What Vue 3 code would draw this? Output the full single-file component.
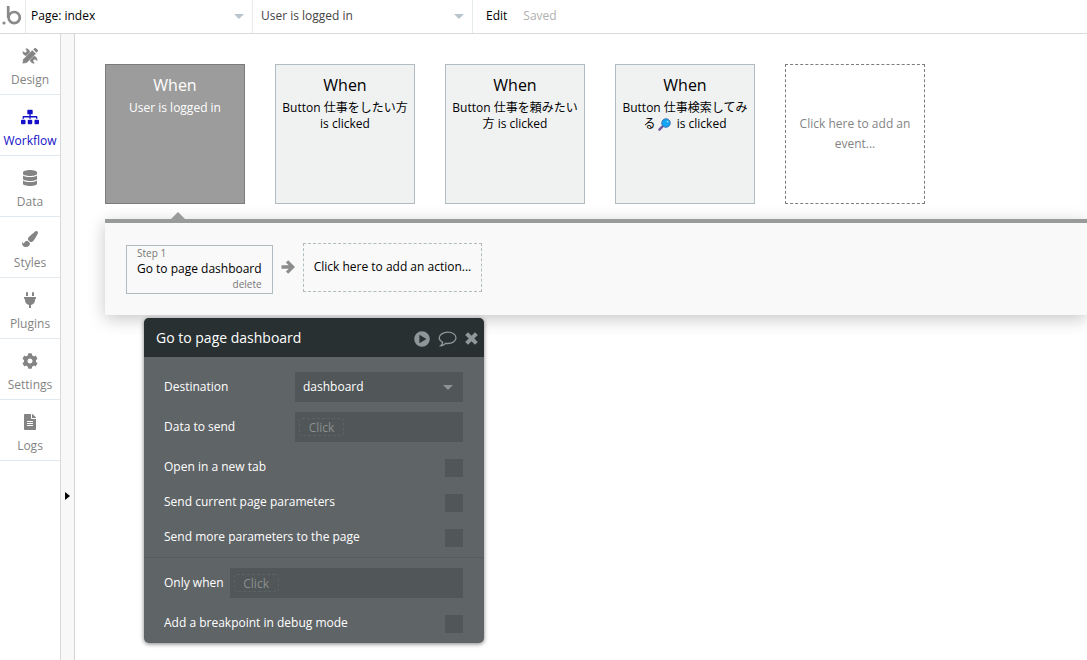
<script setup>
import { ref } from "vue";

const tabs = [
  { label: "Design", icon: "design" },
  {
    label: "Workflow",
    viewBox: "0 0 640 512",
    path: "M128 352H32c-17.67 0-32 14.33-32 32v96c0 17.67 14.33 32 32 32h96c17.67 0 32-14.33 32-32v-96c0-17.67-14.33-32-32-32zm-24-80h192v48h48v-48h192v48h48v-57.59c0-21.17-17.23-38.41-38.41-38.41H344v-64h40c17.67 0 32-14.33 32-32V32c0-17.67-14.33-32-32-32H256c-17.67 0-32 14.33-32 32v96c0 17.67 14.33 32 32 32h40v64H94.41C73.23 224 56 241.23 56 262.41V320h48v-48zm264 80h-96c-17.67 0-32 14.33-32 32v96c0 17.67 14.33 32 32 32h96c17.67 0 32-14.33 32-32v-96c0-17.67-14.33-32-32-32zm240 0h-96c-17.67 0-32 14.33-32 32v96c0 17.67 14.33 32 32 32h96c17.67 0 32-14.33 32-32v-96c0-17.67-14.33-32-32-32z",
  },
  {
    label: "Data",
    viewBox: "0 0 448 512",
    path: "M448 73.143v45.714C448 159.143 347.667 192 224 192S0 159.143 0 118.857V73.143C0 32.857 100.333 0 224 0s224 32.857 224 73.143zM448 176v102.857C448 319.143 347.667 352 224 352S0 319.143 0 278.857V176c48.125 33.143 136.208 48.572 224 48.572S399.874 209.143 448 176zm0 160v102.857C448 479.143 347.667 512 224 512S0 479.143 0 438.857V336c48.125 33.143 136.208 48.572 224 48.572S399.874 369.143 448 336z",
  },
  {
    label: "Styles",
    viewBox: "0 0 512 512",
    path: "M167.02 309.34c-40.12 2.58-76.53 17.86-97.19 72.3-2.35 6.21-8 9.98-14.59 9.98-11.11 0-45.46-27.67-55.25-34.35C0 439.62 37.93 512 128 512c75.86 0 128-43.77 128-120.19 0-3.11-.65-6.08-.97-9.13l-88.01-73.34zM457.89 0c-15.16 0-29.37 6.71-40.21 16.45C213.27 199.05 192 203.34 192 257.09c0 13.7 3.25 26.76 8.73 38.7l63.82 53.18c7.21 1.8 14.64 3.03 22.39 3.03 62.11 0 98.11-45.47 211.16-256.46 7.38-14.35 13.9-29.85 13.9-45.99C512 20.64 486 0 457.89 0z",
  },
  {
    label: "Plugins",
    viewBox: "0 0 384 512",
    path: "M320 32a32 32 0 0 0-64 0v96h64zm48 128H16a16 16 0 0 0-16 16v32a16 16 0 0 0 16 16h16v32a160.07 160.07 0 0 0 128 156.8V512h64v-99.2A160.07 160.07 0 0 0 352 256v-32h16a16 16 0 0 0 16-16v-32a16 16 0 0 0-16-16zM128 32a32 32 0 0 0-64 0v96h64z",
  },
  {
    label: "Settings",
    viewBox: "0 0 512 512",
    path: "M487.4 315.7l-42.6-24.6c4.3-23.2 4.3-47 0-70.2l42.6-24.6c4.9-2.8 7.1-8.6 5.5-14-11.1-35.6-30-67.8-54.7-94.6-3.8-4.1-10-5.1-14.8-2.3L380.8 110c-17.9-15.4-38.5-27.3-60.8-35.1V25.8c0-5.6-3.9-10.5-9.4-11.7-36.7-8.2-74.3-7.8-109.2 0-5.5 1.2-9.4 6.1-9.4 11.7V75c-22.2 7.9-42.8 19.8-60.8 35.1L88.7 85.5c-4.9-2.8-11-1.9-14.8 2.3-24.7 26.7-43.6 58.9-54.7 94.6-1.7 5.4.6 11.2 5.5 14L67.3 221c-4.3 23.2-4.3 47 0 70.2l-42.6 24.6c-4.9 2.8-7.1 8.6-5.5 14 11.1 35.6 30 67.8 54.7 94.6 3.8 4.1 10 5.1 14.8 2.3l42.6-24.6c17.9 15.4 38.5 27.3 60.8 35.1v49.2c0 5.6 3.9 10.5 9.4 11.7 36.7 8.2 74.3 7.8 109.2 0 5.5-1.2 9.4-6.1 9.4-11.7v-49.2c22.2-7.9 42.8-19.8 60.8-35.1l42.6 24.6c4.9 2.8 11 1.9 14.8-2.3 24.7-26.7 43.6-58.9 54.7-94.6 1.5-5.5-.7-11.3-5.6-14.1zM256 336c-44.1 0-80-35.9-80-80s35.9-80 80-80 80 35.9 80 80-35.9 80-80 80z",
  },
  {
    label: "Logs",
    viewBox: "0 0 384 512",
    path: "M224 136V0H24C10.7 0 0 10.7 0 24v464c0 13.3 10.7 24 24 24h336c13.3 0 24-10.7 24-24V160H248c-13.2 0-24-10.8-24-24zm64 236c0 6.6-5.4 12-12 12H108c-6.6 0-12-5.4-12-12v-8c0-6.6 5.4-12 12-12h168c6.6 0 12 5.4 12 12v8zm0-64c0 6.6-5.4 12-12 12H108c-6.6 0-12-5.4-12-12v-8c0-6.6 5.4-12 12-12h168c6.6 0 12 5.4 12 12v8zm0-72v8c0 6.6-5.4 12-12 12H108c-6.6 0-12-5.4-12-12v-8c0-6.6 5.4-12 12-12h168c6.6 0 12 5.4 12 12zm96-114.1v6.1H256V0h6.1c6.4 0 12.5 2.5 17 7l97.9 98c4.5 4.5 7 10.6 7 16.9z",
  },
];

const events = [
  { text: "User is logged in" },
  { text: "Button 仕事をしたい方 is clicked" },
  { text: "Button 仕事を頼みたい方 is clicked" },
  { text: "Button 仕事検索してみる", glass: true, after: " is clicked" },
];

const activeTab = ref("Workflow");
const activeEvent = ref(0);

const options = ref([
  { id: "new-tab", label: "Open in a new tab", checked: false },
  { id: "current-params", label: "Send current page parameters", checked: false },
  { id: "more-params", label: "Send more parameters to the page", checked: false },
]);
const breakpoint = ref(false);
</script>

<template>
  <div class="editor">
    <header class="topbar">
      <a class="logo" href="#" aria-label="Home">
        <svg width="20" height="20" viewBox="0 0 20 20">
          <circle cx="2" cy="17" r="1.6" fill="#8a8a8a" />
          <circle cx="12.2" cy="11.6" r="5.6" fill="none" stroke="#8a8a8a" stroke-width="2.7" />
          <path d="M6.2 0V12" stroke="#8a8a8a" stroke-width="2.7" />
        </svg>
      </a>
      <div class="picker page-picker">
        <select aria-label="Page">
          <option>Page: index</option>
        </select>
      </div>
      <div class="picker event-picker">
        <select aria-label="Event">
          <option>User is logged in</option>
        </select>
      </div>
      <button class="edit" type="button">Edit</button>
      <span class="saved">Saved</span>
    </header>

    <div class="workspace">
      <nav class="sidebar">
        <a
          v-for="tab in tabs"
          :key="tab.label"
          href="#"
          class="tab"
          :class="{ active: tab.label === activeTab }"
          @click.prevent="activeTab = tab.label"
        >
          <!-- crossed pencil and wrench -->
          <svg v-if="tab.icon === 'design'" class="tab-icon" viewBox="0 0 18 18">
            <path d="M.8 3.4l2.2 1.8 2-.5.3-2L3.600.8a4.3 4.3 0 0 1 5.2 5.4L6.400 8.600A4.300 4.300 0 0 1 .8 3.400z" />
            <path d="M17.200 14.600l-2.200-1.800-2 .5-.3 2 1.700 1.900a4.300 4.300 0 0 1-5.200-5.400l2.400-2.400a4.300 4.300 0 0 1 5.600 5.200z" />
            <path
              d="M11.600 2.200l4.200 4.200L5.400 16.800.3 17.700l.9-5.100z"
              stroke="#fff"
              stroke-width=".5"
            />
            <path d="M12.700 1.600L14 .4a1.300 1.300 0 0 1 1.800 0l1.800 1.800a1.300 1.300 0 0 1 0 1.800l-1.200 1.300z" />
          </svg>
          <svg v-else class="tab-icon" :viewBox="tab.viewBox">
            <path :d="tab.path" />
          </svg>
          <span>{{ tab.label }}</span>
        </a>
      </nav>

      <div class="gutter">
        <button class="expand" type="button" aria-label="Expand panel"></button>
      </div>

      <main class="canvas">
        <section class="events">
          <button
            v-for="(event, index) in events"
            :key="event.text"
            type="button"
            class="event"
            :class="{ selected: index === activeEvent }"
            @click="activeEvent = index"
          >
            <span class="when">When</span>
            <span class="event-text">
              {{ event.text }}<svg v-if="event.glass" class="glass" viewBox="0 0 14 14">
                <path d="M1.5 12.5L5.5 8.5" stroke="#6d5a9c" stroke-width="2.6" stroke-linecap="round" />
                <circle cx="8.6" cy="5.4" r="4.6" fill="#12a5f4" stroke="#3b6fb0" />
                <circle cx="10.2" cy="3.9" r="1" fill="#9fe0ff" />
              </svg>{{ event.after }}
            </span>
          </button>
          <button type="button" class="event add-event">Click here to add an event...</button>
        </section>

        <section class="actions">
          <button type="button" class="step">
            <span class="step-small">Step 1</span>
            <span class="step-name">Go to page dashboard</span>
            <span class="step-small step-delete">delete</span>
          </button>
          <svg class="arrow" width="14" height="14" viewBox="0 0 14 14">
            <path d="M.5 5.3h7.2L4.900 2.500 7.200.2 14 7l-6.800 6.800-2.300-2.300 2.800-2.800H.5z" fill="#8c8c8c" />
          </svg>
          <button type="button" class="add-action">Click here to add an action...</button>
        </section>

        <form class="dialog" @submit.prevent>
          <header class="dialog-head">
            <h2>Go to page dashboard</h2>
            <button type="button" aria-label="Run">
              <svg width="16" height="16" viewBox="0 0 16 16">
                <path fill-rule="evenodd" d="M8 .2a7.800 7.800 0 1 0 0 15.600A7.800 7.800 0 0 0 8 .2zM5.400 3.700v8.600L12.400 8z" />
              </svg>
            </button>
            <button type="button" aria-label="Comment">
              <svg width="19" height="16" viewBox="0 0 19 16">
                <path
                  d="M9.700 1.200C5.300 1.200 1.200 3.700 1.200 6.800c0 1.900 1.500 3.500 3.500 4.500-.2 1.300-.9 2.400-2 3.500 2.100-.2 3.700-1.100 4.900-2.500.6.100 1.400.2 2.100.2 4.600 0 8.300-2.500 8.300-5.700s-3.700-5.600-8.300-5.600z"
                  fill="none"
                  stroke="#8d9799"
                  stroke-width="1.3"
                />
              </svg>
            </button>
            <button type="button" aria-label="Close">
              <svg width="13" height="13" viewBox="0 0 13 13">
                <path d="M1.600 1.600l9.800 9.800M11.400 1.600l-9.800 9.800" stroke="#8d9799" stroke-width="4" />
              </svg>
            </button>
          </header>

          <div class="dialog-body">
            <div class="row">
              <label for="destination">Destination</label>
              <div class="picker field">
                <select id="destination">
                  <option>dashboard</option>
                </select>
              </div>
            </div>
            <div class="row">
              <label for="data-to-send">Data to send</label>
              <div class="field">
                <input id="data-to-send" class="expression" type="text" placeholder="Click" />
              </div>
            </div>
            <div v-for="option in options" :key="option.id" class="row check-row">
              <label :for="option.id">{{ option.label }}</label>
              <input :id="option.id" v-model="option.checked" type="checkbox" />
            </div>
          </div>

          <div class="dialog-body condition">
            <div class="row">
              <label for="only-when">Only when</label>
              <div class="field wide">
                <input id="only-when" class="expression" type="text" placeholder="Click" />
              </div>
            </div>
            <div class="row check-row">
              <label for="breakpoint">Add a breakpoint in debug mode</label>
              <input id="breakpoint" v-model="breakpoint" type="checkbox" />
            </div>
          </div>
        </form>
      </main>
    </div>
  </div>
</template>

<style>
body {
  background: #fff;
}
</style>

<style scoped>
.editor,
.editor * {
  box-sizing: border-box;
}

.editor {
  display: flex;
  flex-direction: column;
  min-height: 100vh;
  overflow: hidden;
  font-family: "Open Sans", "Noto Sans CJK JP", sans-serif;
  font-size: 12px;
  line-height: 16px;
  color: #000;
}

button,
select,
input {
  margin: 0;
  padding: 0;
  border: 0;
  border-radius: 0;
  background: none;
  font: inherit;
  color: inherit;
}

button {
  cursor: pointer;
}

/* top bar */
.topbar {
  display: flex;
  align-items: center;
  height: 34px;
  padding-bottom: 1px;
  border-bottom: 1px solid #d9dadb;
}

.logo {
  display: flex;
  align-items: center;
  width: 26px;
  height: 33px;
  padding-left: 2px;
  border-right: 1px solid #e6ebee;
}

.picker {
  position: relative;
}

.picker select {
  appearance: none;
  width: 100%;
  height: 100%;
  padding: 0 24px 0 5px;
}

.picker::after {
  content: "";
  position: absolute;
  top: 50%;
  right: 8px;
  margin-top: -2px;
  border: 5px solid transparent;
  border-top-color: #b9c5cc;
  border-bottom: 0;
  pointer-events: none;
}

.page-picker {
  width: 227px;
  height: 33px;
  border-right: 1px solid #e6ebee;
}

.event-picker {
  width: 220px;
  height: 33px;
  border-right: 1px solid #e6ebee;
  color: #444;
}

.event-picker select {
  padding-left: 8px;
}

.edit {
  margin-left: 13px;
}

.saved {
  margin-left: 16px;
  color: #b0b0b0;
}

/* sidebar */
.workspace {
  display: flex;
  flex: 1;
}

.sidebar {
  flex: none;
  width: 61px;
  border-right: 1px solid #d9d9d9;
}

.tab {
  display: flex;
  flex-direction: column;
  align-items: center;
  gap: 7px;
  height: 61px;
  padding-top: 13px;
  border-bottom: 1px solid #e1eaee;
  color: #848484;
  text-decoration: none;
}

.tab.active {
  color: #1410c8;
}

.tab-icon {
  width: 18px;
  height: 18px;
  padding: 1px 0;
  fill: currentColor;
}

.gutter {
  flex: none;
  width: 14px;
  border-right: 1px solid #d4d4d4;
  background: #f8f8f8;
}

.expand {
  display: block;
  width: 5px;
  height: 8px;
  margin: 458px 0 0 4px;
  background: #000;
  clip-path: polygon(0 0, 100% 50%, 0 100%);
}

/* events */
.canvas {
  flex: 1;
  min-width: 0;
  padding: 30px 0 17px 30px;
}

.events {
  display: flex;
  gap: 30px;
}

.event {
  display: flex;
  flex: none;
  flex-direction: column;
  align-items: center;
  width: 140px;
  height: 140px;
  padding: 10px 5px;
  border: 1px solid #b1bdc3;
  background: #f0f2f2;
  text-align: center;
}

.event.selected {
  position: relative;
  border-color: #7b7b7b;
  background: #9c9c9c;
  color: #fff;
}

.event.selected::after {
  content: "";
  position: absolute;
  top: 147px;
  left: 65px;
  border: 7px solid transparent;
  border-bottom-color: #9b9b9b;
  border-top: 0;
}

.when {
  margin-bottom: 5px;
  font-size: 16px;
  line-height: 20px;
}

.glass {
  width: 13px;
  height: 13px;
  margin: 0 3px 0 2px;
  fill: none;
  vertical-align: -3px;
}

.event.add-event {
  justify-content: center;
  border: 1px dashed #7d7d7d;
  background: #fff;
  color: #848484;
  line-height: 20px;
}

/* actions */
.actions {
  display: flex;
  align-items: center;
  height: 96px;
  margin-top: 15px;
  padding: 0 0 4px 21px;
  border-top: 4px solid #999b9b;
  background: #f9f9f9;
  box-shadow: 0 4px 16px rgba(0, 0, 0, 0.22);
}

.step {
  display: flex;
  flex-direction: column;
  align-items: flex-start;
  height: 49px;
  margin-top: 4px;
  padding: 0 10px;
  border: 1px solid #b0bcbf;
  text-align: left;
}

.step-small {
  font-size: 10px;
  line-height: 15px;
  color: #777;
}

.step-delete {
  align-self: flex-end;
}

.arrow {
  margin: 0 8px;
}

.add-action {
  height: 49px;
  padding: 0 10px;
  border: 1px dashed #b0bcc0;
}

/* property dialog */
.dialog {
  position: relative;
  width: 340px;
  margin: 3px 0 0 39px;
  border-radius: 5px;
  overflow: hidden;
  background: #5f6467;
  box-shadow: 0 1px 4px rgba(0, 0, 0, 0.5);
  color: #fff;
}

.dialog-head {
  display: flex;
  align-items: center;
  gap: 8px;
  height: 39px;
  padding: 0 6px 0 12px;
  background: #283031;
}

.dialog-head h2 {
  flex: 1;
  margin: 0;
  font-size: 14px;
  font-weight: 400;
}

.dialog-head button {
  display: flex;
  padding-top: 2px;
}

.dialog-head svg {
  fill: #8d9799;
}

.dialog-body {
  display: flex;
  flex-direction: column;
  gap: 10px;
  padding: 15px 21px 10px 20px;
}

.dialog-body.condition {
  padding-top: 10px;
  border-top: 1px solid #565b5d;
}

.row {
  display: flex;
  align-items: center;
  justify-content: space-between;
  gap: 6px;
}

.check-row {
  margin-top: 7px;
}

.check-row label {
  padding-bottom: 2px;
}

.field {
  display: flex;
  align-items: center;
  width: 168px;
  height: 30px;
  background: #515658;
}

.field.wide {
  flex: 1;
}

.field select {
  padding-left: 8px;
}

.field.picker::after {
  right: 10px;
  border-top-color: #8d9496;
}

.expression {
  width: 45px;
  height: 18px;
  margin-left: 4px;
  border: 1px dashed #5d6264;
  border-radius: 3px;
  text-align: center;
}

.expression::placeholder {
  color: #8b8f90;
}

input[type="checkbox"] {
  appearance: none;
  width: 18px;
  height: 18px;
  background: #515658;
}

input[type="checkbox"]:checked {
  background: #b9c5cc;
}
</style>
